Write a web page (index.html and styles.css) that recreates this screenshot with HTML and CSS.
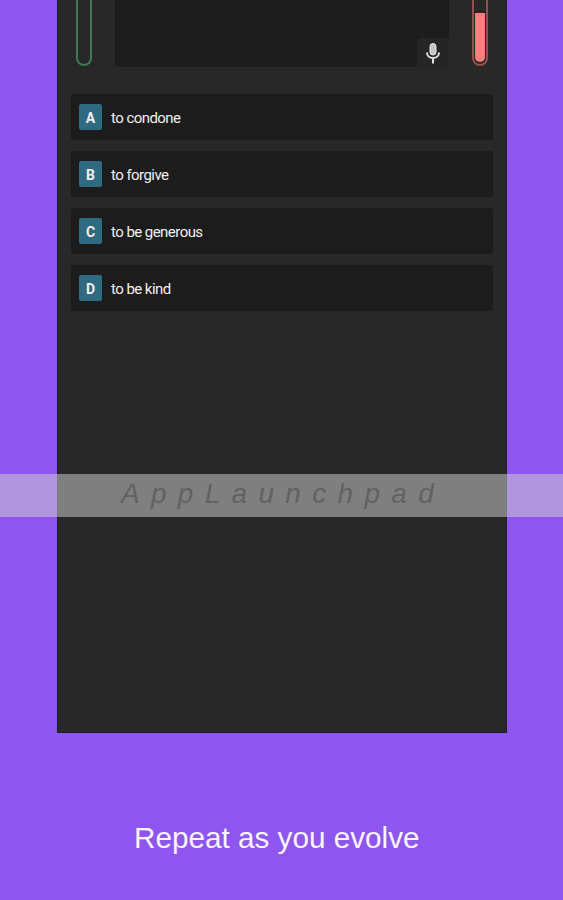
FILE: index.html
```html
<!DOCTYPE html>
<html lang="en">
<head>
    <meta charset="UTF-8">
    <meta name="viewport" content="width=device-width, initial-scale=1.0">
    <title>Repeat as you evolve</title>
    <link rel="stylesheet" href="styles.css">
</head>
<body>
    <div class="phone">
        <div class="question-row">
            <div class="tube tube-green"></div>
            <div class="question">
                <div class="mic">
                    <svg width="16" height="22" viewBox="0 0 16 22">
                        <rect x="5" y="1.5" width="6" height="11.5" rx="3" fill="#c4c4c4" stroke="#ececec"/>
                        <path d="M2 10.5c0 3.5 2.6 5.5 6 5.5s6-2 6-5.5M8 16V21.5" fill="none" stroke="#e2e2e2" stroke-width="2"/>
                    </svg>
                </div>
            </div>
            <div class="tube tube-red">
                <div class="tube-fill"></div>
            </div>
        </div>

        <div class="options">
            <div class="option"><span class="letter">A</span><span class="answer">to condone</span></div>
            <div class="option"><span class="letter">B</span><span class="answer">to forgive</span></div>
            <div class="option"><span class="letter">C</span><span class="answer">to be generous</span></div>
            <div class="option"><span class="letter">D</span><span class="answer">to be kind</span></div>
        </div>
    </div>

    <div class="caption">Repeat as you evolve</div>

    <!-- Watermark band over the phone -->
    <div class="watermark">AppLaunchpad</div>
</body>
</html>
```

FILE: styles.css
```css
* {
    box-sizing: border-box;
}

body {
    margin: 0;
    height: 900px;
    position: relative;
    overflow: hidden;
    background-color: #8f55ef;
    font-family: 'Liberation Sans', Arial, sans-serif;
}

.phone {
    width: 450px;
    height: 733px;
    margin-left: 57px;
    padding: 0 14px;
    background-color: #282828;
    border: solid #1b211f;
    border-width: 0 1px 1px;
}

.question-row {
    display: flex;
    align-items: flex-start;
    height: 94px;
    padding: 0 4px;
}

.tube {
    width: 16px;
    height: 66px;
    border: 2px solid #3f7a52;
    border-top: 0;
    border-radius: 0 0 8px 8px;
}

.tube-red {
    display: flex;
    align-items: flex-end;
    padding: 0 1px 2px;
    border-color: #93504e;
}

.tube-fill {
    width: 100%;
    height: 49px;
    background-color: #fb7d7d;
    border-radius: 0 0 5px 5px;
}

.question {
    display: flex;
    justify-content: flex-end;
    align-items: flex-end;
    width: 334px;
    height: 67px;
    margin: 0 23px;
    background-color: #1c1c1c;
    border-radius: 0 0 2px 2px;
}

.mic {
    display: flex;
    justify-content: center;
    align-items: center;
    width: 32px;
    height: 29px;
    background-color: #252525;
    border-radius: 3px 0 0 0;
}

.options {
    display: flex;
    flex-direction: column;
    gap: 11px;
    margin: 0 -1px;
}

.option {
    display: flex;
    align-items: center;
    gap: 9px;
    height: 46px;
    padding: 0 8px;
    background-color: #1c1c1c;
    border-radius: 2px;
    color: #f0f0f0;
    font-family: Roboto, sans-serif;
    font-size: 15px;
}

.letter {
    width: 23px;
    height: 26px;
    line-height: 28px;
    background-color: #2f6a82;
    border-radius: 2px;
    text-align: center;
    font-size: 14px;
    font-weight: bold;
}

.answer {
    padding-top: 2px;
    letter-spacing: -0.55px;
}

.caption {
    margin-top: 87px;
    padding-left: 134px;
    color: #faf6ff;
    font-size: 29.7px;
    line-height: 36px;
}

.watermark {
    position: absolute;
    top: 474px;
    left: 0;
    width: 100%;
    height: 43px;
    padding-left: 121px;
    background-color: rgba(206, 206, 206, 0.53);
    color: #626262;
    font-size: 28px;
    font-style: italic;
    letter-spacing: 11.3px;
    line-height: 39px;
    white-space: nowrap;
}
```
